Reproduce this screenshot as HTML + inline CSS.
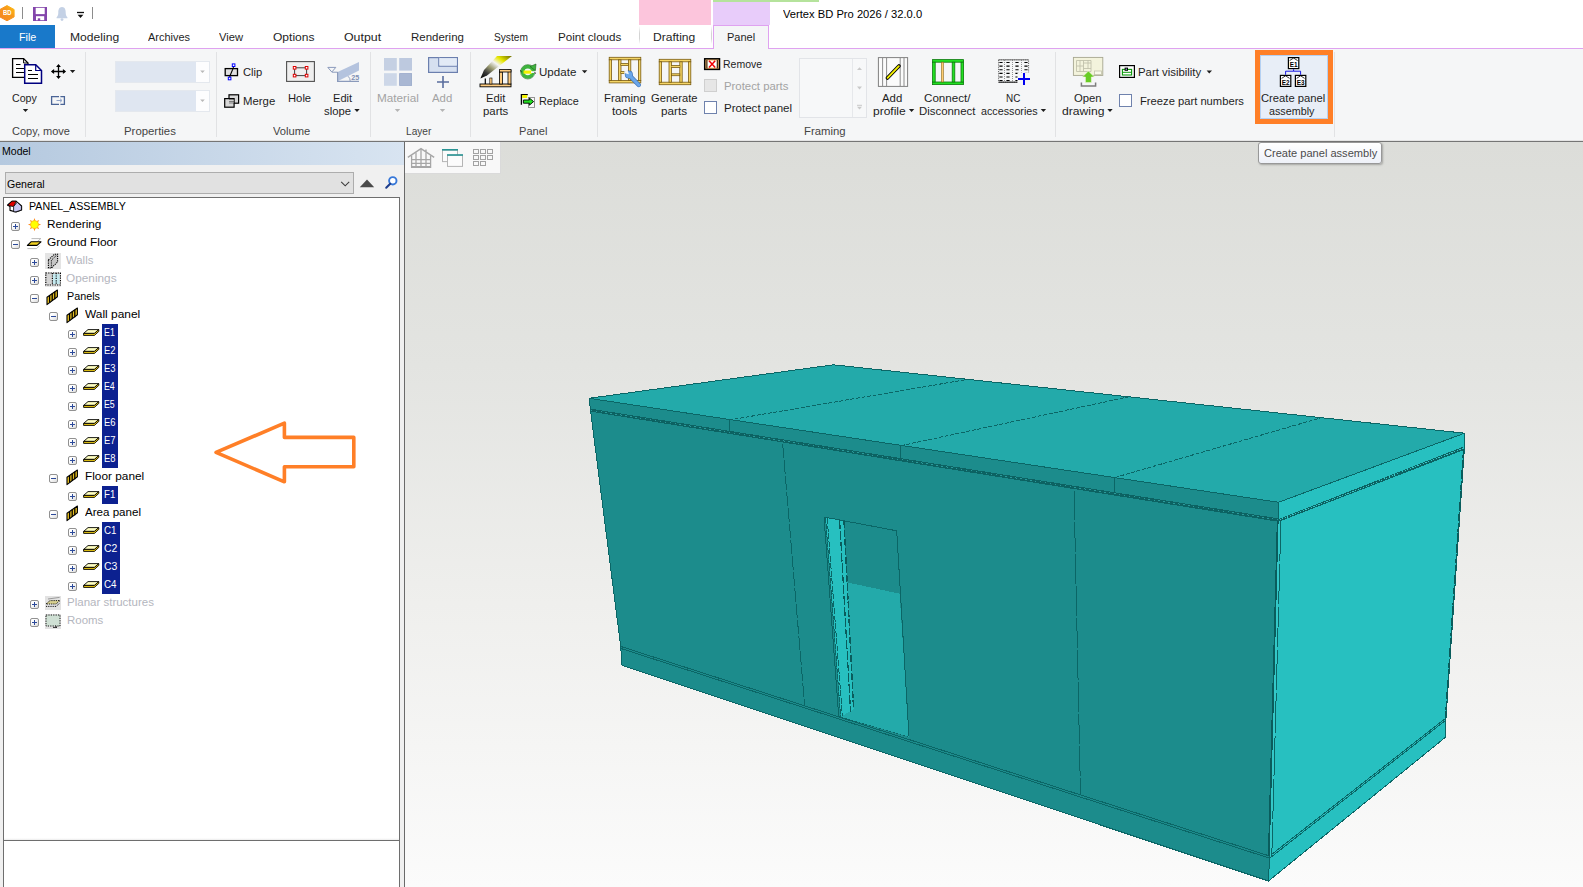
<!DOCTYPE html>
<html lang="en"><head><meta charset="utf-8"><title>Vertex BD Pro 2026 / 32.0.0</title>
<style>
html,body{margin:0;padding:0}
body{width:1583px;height:887px;overflow:hidden;position:relative;background:#fff;font:12px/14px "Liberation Sans",sans-serif}
.b{position:absolute}
.t{position:absolute;white-space:nowrap;transform-origin:0 50%;line-height:14px;height:14px;font-size:12px}
svg.ov{position:absolute;left:0;top:0;pointer-events:none}

</style></head><body>
<div class="b" style="left:405px;top:142px;width:1178px;height:745px;background:linear-gradient(#dcddd9,#e3e4e1 30%,#efefed 62%,#fbfbfb)"></div>
<div class="b" style="left:405px;top:142px;width:96px;height:32px;box-sizing:border-box;background:#f8f8f8;border-right:1px solid #dadada;border-bottom:1px solid #dadada"></div>
<div class="b" style="left:0px;top:142px;width:404px;height:745px;background:#f0f0f0"></div>
<div class="b" style="left:0px;top:142px;width:404px;height:23px;background:linear-gradient(90deg,#b5c9df,#d8e4f1)"></div>
<div class="b" style="left:404px;top:142px;width:1px;height:745px;background:#6a6a6a"></div>
<div class="b" style="left:5px;top:172px;width:349px;height:22px;box-sizing:border-box;border:1px solid #adadad;background:#e1e1e1"></div>
<div class="b" style="left:3px;top:197px;width:397px;height:690px;box-sizing:border-box;border:1px solid #6e6e6e;border-bottom:none;background:#fff"></div>
<div class="b" style="left:3px;top:840px;width:397px;height:1px;background:#6e6e6e"></div>
<div class="b" style="left:4px;top:838px;width:395px;height:2px;background:linear-gradient(#fff,#ececec)"></div>
<div class="b" style="left:102px;top:324px;width:16px;height:144px;background:#0c2190"></div>
<div class="b" style="left:102px;top:486px;width:16px;height:18px;background:#0c2190"></div>
<div class="b" style="left:102px;top:522px;width:18px;height:72px;background:#0c2190"></div>
<div class="b" style="left:11.0px;top:222px;width:9.0px;height:9px;box-sizing:border-box;border:1px solid #919191;border-radius:2px;background:linear-gradient(135deg,#fff 30%,#dcdcdc)"></div>
<div class="b" style="left:11.0px;top:240px;width:9.0px;height:9px;box-sizing:border-box;border:1px solid #919191;border-radius:2px;background:linear-gradient(135deg,#fff 30%,#dcdcdc)"></div>
<div class="b" style="left:30.0px;top:258px;width:9.0px;height:9px;box-sizing:border-box;border:1px solid #919191;border-radius:2px;background:linear-gradient(135deg,#fff 30%,#dcdcdc)"></div>
<div class="b" style="left:30.0px;top:276px;width:9.0px;height:9px;box-sizing:border-box;border:1px solid #919191;border-radius:2px;background:linear-gradient(135deg,#fff 30%,#dcdcdc)"></div>
<div class="b" style="left:30.0px;top:294px;width:9.0px;height:9px;box-sizing:border-box;border:1px solid #919191;border-radius:2px;background:linear-gradient(135deg,#fff 30%,#dcdcdc)"></div>
<div class="b" style="left:49.0px;top:312px;width:9.0px;height:9px;box-sizing:border-box;border:1px solid #919191;border-radius:2px;background:linear-gradient(135deg,#fff 30%,#dcdcdc)"></div>
<div class="b" style="left:68.0px;top:330px;width:9.0px;height:9px;box-sizing:border-box;border:1px solid #919191;border-radius:2px;background:linear-gradient(135deg,#fff 30%,#dcdcdc)"></div>
<div class="b" style="left:68.0px;top:348px;width:9.0px;height:9px;box-sizing:border-box;border:1px solid #919191;border-radius:2px;background:linear-gradient(135deg,#fff 30%,#dcdcdc)"></div>
<div class="b" style="left:68.0px;top:366px;width:9.0px;height:9px;box-sizing:border-box;border:1px solid #919191;border-radius:2px;background:linear-gradient(135deg,#fff 30%,#dcdcdc)"></div>
<div class="b" style="left:68.0px;top:384px;width:9.0px;height:9px;box-sizing:border-box;border:1px solid #919191;border-radius:2px;background:linear-gradient(135deg,#fff 30%,#dcdcdc)"></div>
<div class="b" style="left:68.0px;top:402px;width:9.0px;height:9px;box-sizing:border-box;border:1px solid #919191;border-radius:2px;background:linear-gradient(135deg,#fff 30%,#dcdcdc)"></div>
<div class="b" style="left:68.0px;top:420px;width:9.0px;height:9px;box-sizing:border-box;border:1px solid #919191;border-radius:2px;background:linear-gradient(135deg,#fff 30%,#dcdcdc)"></div>
<div class="b" style="left:68.0px;top:438px;width:9.0px;height:9px;box-sizing:border-box;border:1px solid #919191;border-radius:2px;background:linear-gradient(135deg,#fff 30%,#dcdcdc)"></div>
<div class="b" style="left:68.0px;top:456px;width:9.0px;height:9px;box-sizing:border-box;border:1px solid #919191;border-radius:2px;background:linear-gradient(135deg,#fff 30%,#dcdcdc)"></div>
<div class="b" style="left:49.0px;top:474px;width:9.0px;height:9px;box-sizing:border-box;border:1px solid #919191;border-radius:2px;background:linear-gradient(135deg,#fff 30%,#dcdcdc)"></div>
<div class="b" style="left:68.0px;top:492px;width:9.0px;height:9px;box-sizing:border-box;border:1px solid #919191;border-radius:2px;background:linear-gradient(135deg,#fff 30%,#dcdcdc)"></div>
<div class="b" style="left:49.0px;top:510px;width:9.0px;height:9px;box-sizing:border-box;border:1px solid #919191;border-radius:2px;background:linear-gradient(135deg,#fff 30%,#dcdcdc)"></div>
<div class="b" style="left:68.0px;top:528px;width:9.0px;height:9px;box-sizing:border-box;border:1px solid #919191;border-radius:2px;background:linear-gradient(135deg,#fff 30%,#dcdcdc)"></div>
<div class="b" style="left:68.0px;top:546px;width:9.0px;height:9px;box-sizing:border-box;border:1px solid #919191;border-radius:2px;background:linear-gradient(135deg,#fff 30%,#dcdcdc)"></div>
<div class="b" style="left:68.0px;top:564px;width:9.0px;height:9px;box-sizing:border-box;border:1px solid #919191;border-radius:2px;background:linear-gradient(135deg,#fff 30%,#dcdcdc)"></div>
<div class="b" style="left:68.0px;top:582px;width:9.0px;height:9px;box-sizing:border-box;border:1px solid #919191;border-radius:2px;background:linear-gradient(135deg,#fff 30%,#dcdcdc)"></div>
<div class="b" style="left:30.0px;top:600px;width:9.0px;height:9px;box-sizing:border-box;border:1px solid #919191;border-radius:2px;background:linear-gradient(135deg,#fff 30%,#dcdcdc)"></div>
<div class="b" style="left:30.0px;top:618px;width:9.0px;height:9px;box-sizing:border-box;border:1px solid #919191;border-radius:2px;background:linear-gradient(135deg,#fff 30%,#dcdcdc)"></div>
<div class="b" style="left:0px;top:0px;width:1583px;height:49px;background:#fff"></div>
<div class="b" style="left:639px;top:0px;width:72px;height:25px;background:#fcc5dc"></div>
<div class="b" style="left:713px;top:0px;width:57px;height:25px;background:#e8ccfa"></div>
<div class="b" style="left:713px;top:0px;width:106px;height:2px;background:#b5e39c"></div>
<div class="b" style="left:0px;top:25px;width:55px;height:23px;background:#1979ca"></div>
<div class="b" style="left:0px;top:49px;width:1583px;height:92px;background:#f5f6f7"></div>
<div class="b" style="left:0px;top:48px;width:1583px;height:1px;background:#dfa2f0"></div>
<div class="b" style="left:713px;top:25px;width:56px;height:24px;background:#f5f6f7;border:1px solid #dfa2f0;border-bottom:none;box-sizing:border-box"></div>
<div class="b" style="left:639px;top:26px;width:1px;height:18px;background:linear-gradient(#fff,#d4d4d4 40%,#d4d4d4 70%,#fff)"></div>
<div class="b" style="left:711px;top:26px;width:1px;height:18px;background:linear-gradient(#fff,#d4d4d4 40%,#d4d4d4 70%,#fff)"></div>
<div class="b" style="left:0px;top:140px;width:1583px;height:1px;background:#e4e4e4"></div>
<div class="b" style="left:0px;top:141px;width:1583px;height:1px;background:#757575"></div>
<div class="b" style="left:85px;top:52px;width:1px;height:85px;background:#e1e2e4"></div>
<div class="b" style="left:216px;top:52px;width:1px;height:85px;background:#e1e2e4"></div>
<div class="b" style="left:370px;top:52px;width:1px;height:85px;background:#e1e2e4"></div>
<div class="b" style="left:470px;top:52px;width:1px;height:85px;background:#e1e2e4"></div>
<div class="b" style="left:597px;top:52px;width:1px;height:85px;background:#e1e2e4"></div>
<div class="b" style="left:1055px;top:52px;width:1px;height:85px;background:#e1e2e4"></div>
<div class="b" style="left:1334px;top:52px;width:1px;height:85px;background:#e1e2e4"></div>
<div class="b" style="left:115px;top:61px;width:95px;height:22px;box-sizing:border-box;border:1px solid #e4e8ee;background:linear-gradient(90deg,#dfe6f1 0,#dfe6f1 80px,#fdfdfe 80px)"></div>
<div class="b" style="left:115px;top:90px;width:95px;height:22px;box-sizing:border-box;border:1px solid #e4e8ee;background:linear-gradient(90deg,#dfe6f1 0,#dfe6f1 80px,#fdfdfe 80px)"></div>
<div class="b" style="left:704px;top:79px;width:13px;height:13px;box-sizing:border-box;border:1px solid #cfcfcf;background:#e6e6e6"></div>
<div class="b" style="left:704px;top:101px;width:13px;height:13px;box-sizing:border-box;border:1px solid #6f82ad;background:#fff"></div>
<div class="b" style="left:1119px;top:94px;width:13px;height:13px;box-sizing:border-box;border:1px solid #6f82ad;background:#fff"></div>
<div class="b" style="left:799px;top:58px;width:68px;height:60px;box-sizing:border-box;border:1px solid #e2e4e8;background:#f7f8f9"></div>
<div class="b" style="left:852px;top:59px;width:1px;height:58px;background:#e6e8eb"></div>
<div class="b" style="left:1255px;top:50px;width:78px;height:74px;box-sizing:border-box;border:5px solid #ff7f27;background:#e8eef7"></div>
<div class="b" style="left:1260px;top:55px;width:68px;height:64px;box-sizing:border-box;border:1px solid #b4d0f2"></div>
<svg class="ov" width="1583" height="887" viewBox="0 0 1583 887">
<path d="M407.8,157.4L421,148.6L434.2,157.4M426,149.4v2.6" fill="none" stroke="#a6a6a6" stroke-width="1.4"/>
<path d="M411.6,155.4V167.4H430.6V155.4M411.6,159.6H430.6M411.6,163.4H430.6M416,152.6V167.4M421,149V167.4M426,152.6V167.4M411.6,166.6H430.6" fill="none" stroke="#a6a6a6" stroke-width="1.3"/>
<rect x="442.5" y="150" width="15" height="11.6" fill="#fbfbfb" stroke="#b4b4b4" stroke-width="1"/><rect x="442" y="149" width="16" height="1.6" fill="#2a9494"/>
<rect x="447.5" y="155.2" width="15" height="11.2" fill="#fbfbfb" stroke="#b4b4b4" stroke-width="1"/><rect x="447" y="154.2" width="16" height="1.6" fill="#2a9494"/>
<rect x="473.5" y="149.5" width="5" height="4" fill="none" stroke="#a2a2a2" stroke-width="1"/>
<rect x="480.5" y="149.5" width="5" height="4" fill="none" stroke="#a2a2a2" stroke-width="1"/>
<rect x="487.5" y="149.5" width="5" height="4" fill="none" stroke="#a2a2a2" stroke-width="1"/>
<rect x="473.5" y="155.5" width="5" height="4" fill="none" stroke="#a2a2a2" stroke-width="1"/>
<rect x="480.5" y="155.5" width="5" height="4" fill="none" stroke="#a2a2a2" stroke-width="1"/>
<rect x="487.5" y="155.5" width="5" height="4" fill="none" stroke="#a2a2a2" stroke-width="1"/>
<rect x="473.5" y="161.5" width="5" height="4" fill="none" stroke="#a2a2a2" stroke-width="1"/>
<rect x="480.5" y="161.5" width="5" height="4" fill="none" stroke="#a2a2a2" stroke-width="1"/>
<g shape-rendering="crispEdges">
<polygon points="590.6,411.2 1278.5,521.3 1269.6,856.0 620.7,646.4" fill="#1c8c8c" stroke="#0b6666" stroke-width="1" stroke-linejoin="round"/>
<polygon points="1278.5,521.3 1464.3,449.3 1446.0,718.0 1269.6,856.0" fill="#27c0c0" stroke="#0b6666" stroke-width="1" stroke-linejoin="round"/>
<polygon points="620.7,646.4 1269.6,856.0 1268.5,881.0 622.0,665.4" fill="#1c8c8c" stroke="#0b6666" stroke-width="1" stroke-linejoin="round"/>
<polygon points="1269.6,856.0 1446.0,718.0 1445.2,737.5 1268.5,881.0" fill="#27c0c0" stroke="#0b6666" stroke-width="1" stroke-linejoin="round"/>
<polygon points="589.0,398.3 1278.5,502.3 1278.5,521.3 590.6,411.2" fill="#1c8c8c" stroke="#0b6666" stroke-width="1" stroke-linejoin="round"/>
<polygon points="1278.5,502.3 1464.5,433.2 1464.3,449.3 1278.5,521.3" fill="#27c0c0" stroke="#0b6666" stroke-width="1" stroke-linejoin="round"/>
<polygon points="589.0,398.3 833.5,364.8 1464.5,433.2 1278.5,502.3" fill="#23aaaa" stroke="#0b6666" stroke-width="1" stroke-linejoin="round"/>
<line x1="729.0" y1="420.0" x2="969.9" y2="379.0" stroke="#0b6666" stroke-width="1" stroke-dasharray="4 1.6"/>
<line x1="729.0" y1="420.0" x2="729.0" y2="431.6" stroke="#0b6666" stroke-width="1"/>
<line x1="900.7" y1="445.7" x2="1128.0" y2="397.0" stroke="#0b6666" stroke-width="1" stroke-dasharray="4 1.6"/>
<line x1="900.7" y1="445.7" x2="900.7" y2="459.0" stroke="#0b6666" stroke-width="1"/>
<line x1="1114.9" y1="477.5" x2="1320.2" y2="418.0" stroke="#0b6666" stroke-width="1" stroke-dasharray="4 1.6"/>
<line x1="1114.9" y1="477.5" x2="1114.9" y2="493.2" stroke="#0b6666" stroke-width="1"/>
<line x1="590.6" y1="410.2" x2="1278.5" y2="519.9" stroke="#0c6262" stroke-width="3"/>
<line x1="590.6" y1="410.2" x2="1278.5" y2="519.9" stroke="#2a9a9a" stroke-width="1" stroke-dasharray="1.5 3.5"/>
<line x1="1279.5" y1="520.1" x2="1463.3" y2="448.1" stroke="#0c6262" stroke-width="2.6"/>
<line x1="1279.5" y1="520.1" x2="1463.3" y2="448.1" stroke="#39c8c8" stroke-width="1" stroke-dasharray="1.2 1.6"/>
<line x1="620.7" y1="648.4" x2="1269.6" y2="858.2" stroke="#0b6666" stroke-width="1"/>
<line x1="1269.6" y1="858.2" x2="1446.0" y2="720.0" stroke="#0b6666" stroke-width="1"/>
<line x1="1279.5" y1="521.3" x2="1270.6" y2="856.0" stroke="#34c8c8" stroke-width="2"/>
<line x1="1277.7" y1="521.3" x2="1268.8" y2="856.0" stroke="#0a5c5c" stroke-width="1.8"/>
<line x1="1280.9" y1="521.3" x2="1271.8" y2="856.0" stroke="#0b6666" stroke-width="1" stroke-dasharray="40 3"/>
<line x1="1463.7" y1="449.3" x2="1445.6" y2="718.0" stroke="#0a5c5c" stroke-width="1.6" stroke-dasharray="9 1.5"/>
<line x1="782.7" y1="444.2" x2="804.6" y2="705.0" stroke="#0b6666" stroke-width="1" stroke-dasharray="14 2"/>
<line x1="1074.0" y1="490.0" x2="1080.5" y2="794.0" stroke="#0b6666" stroke-width="1" stroke-dasharray="30 2"/>
<polygon points="824.0,517.0 896.7,530.8 909.0,736.7 838.7,716.2" fill="#1c8c8c" stroke="#0b6666" stroke-width="1" stroke-linejoin="round"/>
<polygon points="845.4,582.0 899.6,593.7 909.0,736.7 838.7,716.2 853.6,709.4" fill="#23aaaa" stroke="none" stroke-width="0" stroke-linejoin="round"/>
<polygon points="826.0,518.0 844.0,520.6 853.6,709.4 841.0,716.6" fill="#27c0c0" stroke="none" stroke-width="0" stroke-linejoin="round"/>
<line x1="896.7" y1="530.8" x2="909.0" y2="736.7" stroke="#0b6666" stroke-width="1" stroke-dasharray="14 2"/>
<line x1="824.0" y1="517.0" x2="896.7" y2="530.8" stroke="#0b6666" stroke-width="1"/>
<line x1="844.0" y1="520.6" x2="853.6" y2="709.4" stroke="#0a5c5c" stroke-width="1.4" stroke-dasharray="7 2"/>
<line x1="839.6" y1="519.6" x2="850.6" y2="712.0" stroke="#0a5c5c" stroke-width="1.2" stroke-dasharray="9 2"/>
<line x1="824.0" y1="517.0" x2="838.7" y2="716.2" stroke="#0b6666" stroke-width="1"/>
<line x1="825.6" y1="518.0" x2="840.6" y2="716.6" stroke="#0b6666" stroke-width="1" stroke-dasharray="5 1"/>
<line x1="827.2" y1="518.4" x2="842.4" y2="716.0" stroke="#0b6666" stroke-width="1" stroke-dasharray="6 1.5"/>
</g>
<path d="M341.2,181.8l4,4l4,-4" fill="none" stroke="#3c3c3c" stroke-width="1.1"/>
<path d="M359.8,187.2h14.4l-7.2,-7.6z" fill="#4a4a4a"/>
<circle cx="392.8" cy="180.8" r="3.7" fill="#fff" stroke="#3878d8" stroke-width="1.9"/><path d="M390.2,183.8l-4,4" stroke="#1c3c8c" stroke-width="2" stroke-linecap="round"/>
<path d="M7.6,205L12,201.2L16,201.2L21.6,206V210L16,212L10,210.4V206.4Z" fill="#fff" stroke="#000" stroke-width="1.1" stroke-linejoin="round"/>
<path d="M7.6,205.4L12,201.2H16.4L13.6,206.6Z" fill="#e00000" stroke="#000" stroke-width="0.8"/>
<path d="M13.6,206.6L17.2,202.2L21.4,206.2V210L16,211.8H13.6Z" fill="#c8c8f4" stroke="#000" stroke-width="0.8"/>
<path d="M13.0,226.5h5" stroke="#2c4a9a" stroke-width="1"/>
<path d="M15.5,224.0v5" stroke="#2c4a9a" stroke-width="1"/>
<path d="M37.91,223.43L41.10,224.60L37.91,225.77ZM37.73,226.18L39.17,229.27L36.08,227.83ZM35.67,228.01L34.50,231.20L33.33,228.01ZM32.92,227.83L29.83,229.27L31.27,226.18ZM31.09,225.77L27.90,224.60L31.09,223.43ZM31.27,223.02L29.83,219.93L32.92,221.37ZM33.33,221.19L34.50,218.00L35.67,221.19ZM36.08,221.37L39.17,219.93L37.73,223.02Z" fill="#ff8a1e"/><circle cx="34.5" cy="224.6" r="4" fill="#ffff00" stroke="#ffb020" stroke-width="0.7"/>
<path d="M13.0,244.5h5" stroke="#2c4a9a" stroke-width="1"/>
<path d="M31.5,238.6H40.8L36.6,242.2" fill="none" stroke="#a8a8a8" stroke-width="0.8"/>
<path d="M27.4,245.4L31,241.8H41L37,245.4Z" fill="#f0d020" stroke="#000" stroke-width="1.1" stroke-linejoin="round"/>
<path d="M27.4,248.6H36.6L39.6,245.6" fill="none" stroke="#a8a8a8" stroke-width="0.8"/>
<path d="M32.0,262.5h5" stroke="#2c4a9a" stroke-width="1"/>
<path d="M34.5,260.0v5" stroke="#2c4a9a" stroke-width="1"/>
<rect x="45" y="253" width="16" height="16" fill="#e4e4e4"/>
<path d="M48.4,260L54.4,254.2H57.6V262L51.4,268H48.4Z" fill="#c6c6c6" stroke="#000" stroke-width="1.1" stroke-dasharray="1.2 1"/>
<path d="M51.4,268V260.2L57.4,254.4" fill="none" stroke="#000" stroke-width="0.9" stroke-dasharray="1.2 1"/>
<path d="M32.0,280.5h5" stroke="#2c4a9a" stroke-width="1"/>
<path d="M34.5,278.0v5" stroke="#2c4a9a" stroke-width="1"/>
<rect x="45" y="272" width="16" height="15" fill="#e6e6e6"/>
<rect x="45.8" y="273" width="14.6" height="12" fill="#d4d4d4" stroke="#000" stroke-width="1.2" stroke-dasharray="1.2 1.2"/>
<rect x="53" y="274" width="6.6" height="10" fill="#c4eaf0"/><path d="M52.4,273v12M56.2,273v12" stroke="#000" stroke-width="1.1" stroke-dasharray="1.2 1.2"/>
<path d="M32.0,298.5h5" stroke="#2c4a9a" stroke-width="1"/>
<path d="M47.0,297.2L57.4,290.0V296.8L47.0,304.59999999999997Z" fill="#e8c020" stroke="#000" stroke-width="1.1" stroke-linejoin="round"/><path d="M49.60,295.40v7.4" stroke="#000" stroke-width="1.3"/><path d="M52.20,293.60v7.4" stroke="#000" stroke-width="1.3"/><path d="M54.80,291.80v7.4" stroke="#000" stroke-width="1.3"/>
<path d="M51.0,316.5h5" stroke="#2c4a9a" stroke-width="1"/>
<path d="M67.0,315.2L77.4,308.0V314.8L67.0,322.59999999999997Z" fill="#e8c020" stroke="#000" stroke-width="1.1" stroke-linejoin="round"/><path d="M69.60,313.40v7.4" stroke="#000" stroke-width="1.3"/><path d="M72.20,311.60v7.4" stroke="#000" stroke-width="1.3"/><path d="M74.80,309.80v7.4" stroke="#000" stroke-width="1.3"/>
<path d="M70.0,334.5h5" stroke="#2c4a9a" stroke-width="1"/>
<path d="M72.5,332.0v5" stroke="#2c4a9a" stroke-width="1"/>
<path d="M88,329.6H98.8L94.4,333.4H83.6Z" fill="#ffffc0" stroke="#000" stroke-width="0.9" stroke-linejoin="round"/><path d="M83.6,333.4H94.4L98.8,329.6V331.4L94.4,335.4H83.6Z" fill="#f0cc10" stroke="#000" stroke-width="0.9" stroke-linejoin="round"/>
<path d="M70.0,352.5h5" stroke="#2c4a9a" stroke-width="1"/>
<path d="M72.5,350.0v5" stroke="#2c4a9a" stroke-width="1"/>
<path d="M88,347.6H98.8L94.4,351.4H83.6Z" fill="#ffffc0" stroke="#000" stroke-width="0.9" stroke-linejoin="round"/><path d="M83.6,351.4H94.4L98.8,347.6V349.4L94.4,353.4H83.6Z" fill="#f0cc10" stroke="#000" stroke-width="0.9" stroke-linejoin="round"/>
<path d="M70.0,370.5h5" stroke="#2c4a9a" stroke-width="1"/>
<path d="M72.5,368.0v5" stroke="#2c4a9a" stroke-width="1"/>
<path d="M88,365.6H98.8L94.4,369.4H83.6Z" fill="#ffffc0" stroke="#000" stroke-width="0.9" stroke-linejoin="round"/><path d="M83.6,369.4H94.4L98.8,365.6V367.4L94.4,371.4H83.6Z" fill="#f0cc10" stroke="#000" stroke-width="0.9" stroke-linejoin="round"/>
<path d="M70.0,388.5h5" stroke="#2c4a9a" stroke-width="1"/>
<path d="M72.5,386.0v5" stroke="#2c4a9a" stroke-width="1"/>
<path d="M88,383.6H98.8L94.4,387.4H83.6Z" fill="#ffffc0" stroke="#000" stroke-width="0.9" stroke-linejoin="round"/><path d="M83.6,387.4H94.4L98.8,383.6V385.4L94.4,389.4H83.6Z" fill="#f0cc10" stroke="#000" stroke-width="0.9" stroke-linejoin="round"/>
<path d="M70.0,406.5h5" stroke="#2c4a9a" stroke-width="1"/>
<path d="M72.5,404.0v5" stroke="#2c4a9a" stroke-width="1"/>
<path d="M88,401.6H98.8L94.4,405.4H83.6Z" fill="#ffffc0" stroke="#000" stroke-width="0.9" stroke-linejoin="round"/><path d="M83.6,405.4H94.4L98.8,401.6V403.4L94.4,407.4H83.6Z" fill="#f0cc10" stroke="#000" stroke-width="0.9" stroke-linejoin="round"/>
<path d="M70.0,424.5h5" stroke="#2c4a9a" stroke-width="1"/>
<path d="M72.5,422.0v5" stroke="#2c4a9a" stroke-width="1"/>
<path d="M88,419.6H98.8L94.4,423.4H83.6Z" fill="#ffffc0" stroke="#000" stroke-width="0.9" stroke-linejoin="round"/><path d="M83.6,423.4H94.4L98.8,419.6V421.4L94.4,425.4H83.6Z" fill="#f0cc10" stroke="#000" stroke-width="0.9" stroke-linejoin="round"/>
<path d="M70.0,442.5h5" stroke="#2c4a9a" stroke-width="1"/>
<path d="M72.5,440.0v5" stroke="#2c4a9a" stroke-width="1"/>
<path d="M88,437.6H98.8L94.4,441.4H83.6Z" fill="#ffffc0" stroke="#000" stroke-width="0.9" stroke-linejoin="round"/><path d="M83.6,441.4H94.4L98.8,437.6V439.4L94.4,443.4H83.6Z" fill="#f0cc10" stroke="#000" stroke-width="0.9" stroke-linejoin="round"/>
<path d="M70.0,460.5h5" stroke="#2c4a9a" stroke-width="1"/>
<path d="M72.5,458.0v5" stroke="#2c4a9a" stroke-width="1"/>
<path d="M88,455.6H98.8L94.4,459.4H83.6Z" fill="#ffffc0" stroke="#000" stroke-width="0.9" stroke-linejoin="round"/><path d="M83.6,459.4H94.4L98.8,455.6V457.4L94.4,461.4H83.6Z" fill="#f0cc10" stroke="#000" stroke-width="0.9" stroke-linejoin="round"/>
<path d="M51.0,478.5h5" stroke="#2c4a9a" stroke-width="1"/>
<path d="M67.0,477.2L77.4,470.0V476.8L67.0,484.59999999999997Z" fill="#e8c020" stroke="#000" stroke-width="1.1" stroke-linejoin="round"/><path d="M69.60,475.40v7.4" stroke="#000" stroke-width="1.3"/><path d="M72.20,473.60v7.4" stroke="#000" stroke-width="1.3"/><path d="M74.80,471.80v7.4" stroke="#000" stroke-width="1.3"/>
<path d="M70.0,496.5h5" stroke="#2c4a9a" stroke-width="1"/>
<path d="M72.5,494.0v5" stroke="#2c4a9a" stroke-width="1"/>
<path d="M88,491.6H98.8L94.4,495.4H83.6Z" fill="#ffffc0" stroke="#000" stroke-width="0.9" stroke-linejoin="round"/><path d="M83.6,495.4H94.4L98.8,491.6V493.4L94.4,497.4H83.6Z" fill="#f0cc10" stroke="#000" stroke-width="0.9" stroke-linejoin="round"/>
<path d="M51.0,514.5h5" stroke="#2c4a9a" stroke-width="1"/>
<path d="M67.0,513.2L77.4,506.0V512.8L67.0,520.6Z" fill="#e8c020" stroke="#000" stroke-width="1.1" stroke-linejoin="round"/><path d="M69.60,511.40v7.4" stroke="#000" stroke-width="1.3"/><path d="M72.20,509.60v7.4" stroke="#000" stroke-width="1.3"/><path d="M74.80,507.80v7.4" stroke="#000" stroke-width="1.3"/>
<path d="M70.0,532.5h5" stroke="#2c4a9a" stroke-width="1"/>
<path d="M72.5,530.0v5" stroke="#2c4a9a" stroke-width="1"/>
<path d="M88,527.6H98.8L94.4,531.4H83.6Z" fill="#ffffc0" stroke="#000" stroke-width="0.9" stroke-linejoin="round"/><path d="M83.6,531.4H94.4L98.8,527.6V529.4L94.4,533.4H83.6Z" fill="#f0cc10" stroke="#000" stroke-width="0.9" stroke-linejoin="round"/>
<path d="M70.0,550.5h5" stroke="#2c4a9a" stroke-width="1"/>
<path d="M72.5,548.0v5" stroke="#2c4a9a" stroke-width="1"/>
<path d="M88,545.6H98.8L94.4,549.4H83.6Z" fill="#ffffc0" stroke="#000" stroke-width="0.9" stroke-linejoin="round"/><path d="M83.6,549.4H94.4L98.8,545.6V547.4L94.4,551.4H83.6Z" fill="#f0cc10" stroke="#000" stroke-width="0.9" stroke-linejoin="round"/>
<path d="M70.0,568.5h5" stroke="#2c4a9a" stroke-width="1"/>
<path d="M72.5,566.0v5" stroke="#2c4a9a" stroke-width="1"/>
<path d="M88,563.6H98.8L94.4,567.4H83.6Z" fill="#ffffc0" stroke="#000" stroke-width="0.9" stroke-linejoin="round"/><path d="M83.6,567.4H94.4L98.8,563.6V565.4L94.4,569.4H83.6Z" fill="#f0cc10" stroke="#000" stroke-width="0.9" stroke-linejoin="round"/>
<path d="M70.0,586.5h5" stroke="#2c4a9a" stroke-width="1"/>
<path d="M72.5,584.0v5" stroke="#2c4a9a" stroke-width="1"/>
<path d="M88,581.6H98.8L94.4,585.4H83.6Z" fill="#ffffc0" stroke="#000" stroke-width="0.9" stroke-linejoin="round"/><path d="M83.6,585.4H94.4L98.8,581.6V583.4L94.4,587.4H83.6Z" fill="#f0cc10" stroke="#000" stroke-width="0.9" stroke-linejoin="round"/>
<path d="M32.0,604.5h5" stroke="#2c4a9a" stroke-width="1"/>
<path d="M34.5,602.0v5" stroke="#2c4a9a" stroke-width="1"/>
<rect x="45" y="596" width="16" height="14" fill="#e2e2e2"/>
<path d="M46,604L50,600.6H60L56,604Z" fill="#d8d090" stroke="#000" stroke-width="0.9" stroke-dasharray="1.2 1"/><path d="M46,606.4H56L60,603" fill="none" stroke="#000" stroke-width="0.9" stroke-dasharray="1.2 1"/><path d="M48,599L59.6,597.4" stroke="#888" stroke-width="0.8"/>
<path d="M32.0,622.5h5" stroke="#2c4a9a" stroke-width="1"/>
<path d="M34.5,620.0v5" stroke="#2c4a9a" stroke-width="1"/>
<rect x="45" y="614" width="16" height="15" fill="#e2e2e2"/>
<rect x="46" y="615" width="14" height="11" fill="#cfe0d4" stroke="#000" stroke-width="0.9" stroke-dasharray="1.2 1.2"/><path d="M53,627.4h4l-1.6,-1.4" fill="none" stroke="#000" stroke-width="0.8"/>
<path d="M216,452.4 L284.4,423.2 V437.4 H353.8 V466.8 H284.4 V481.8 Z" fill="none" stroke="#ff7f27" stroke-width="3.6" stroke-linejoin="round"/>
<defs><linearGradient id="gbd" x1="0" y1="1" x2="1" y2="0"><stop offset="0" stop-color="#f58220"/><stop offset=".6" stop-color="#f7981d"/><stop offset="1" stop-color="#ffc20e"/></linearGradient></defs>
<path d="M7,5.6 L14.1,9.5 V16.9 L7,20.8 L-0.1,16.9 V9.5 Z" fill="url(#gbd)" stroke="url(#gbd)" stroke-width="1" stroke-linejoin="round"/>
<path d="M22.5,7v12M92.5,7v12" stroke="#8c8c8c" stroke-width="1"/>
<rect x="33" y="7" width="14" height="14" fill="#8345ab"/>
<rect x="35.7" y="7.8" width="9" height="6.3" fill="#fff"/>
<rect x="36" y="16.2" width="8.2" height="4" fill="#fff"/><rect x="37.8" y="18.3" width="2.4" height="2.7" fill="#8345ab"/>
<path d="M62,7 C59,7 58.3,10 58.3,12.5 C58.3,15 57.6,16.3 56.6,17.2 V18.3 H67.4 V17.2 C66.4,16.3 65.7,15 65.7,12.5 C65.7,10 65,7 62,7Z" fill="#c4d1e5"/><circle cx="62" cy="19.6" r="1.4" fill="#c4d1e5"/>
<path d="M77,12.5h7" stroke="#111" stroke-width="1.3"/><path d="M77.6,14.8h5.8l-2.9,3.2z" fill="#111"/>
<path d="M12.6,58.6h11l4.4,4.4v14.4h-15.4z" fill="#fff" stroke="#000" stroke-width="1.3"/><path d="M23.6,58.6v4.4h4.4" fill="none" stroke="#000" stroke-width="1"/>
<path d="M16,64.5h4.5M16,68.5h8M16,72.5h8" stroke="#000" stroke-width="1.2"/>
<path d="M24.7,64.7h11l5.8,5.8v12.8h-16.8z" fill="#fff" stroke="#000080" stroke-width="1.5"/><path d="M35.7,64.7v5.8h5.8" fill="none" stroke="#000080" stroke-width="1.2"/>
<path d="M28,70.5h4M28,74.5h10M28,78.5h10" stroke="#000" stroke-width="1.2"/>
<path d="M22.80,109.00h5.4l-2.70,3z" fill="#1e1e1e"/>
<path d="M52,71.5h13M58.5,65v13" stroke="#000" stroke-width="1.3"/>
<path d="M50.9,71.5l3.2,-2.4v4.8zM66.1,71.5l-3.2,-2.4v4.8zM58.5,63.9l-2.4,3.2h4.8zM58.5,79.1l-2.4,-3.2h4.8z" fill="#000"/>
<path d="M69.90,70.10h5.4l-2.70,3z" fill="#1e1e1e"/>
<path d="M59,96.6H51.6V104.4H59M60.4,96.6H64.4V104.4H60.4" fill="none" stroke="#4a6496" stroke-width="1.3"/><path d="M56.5,100.5h5M60,98.7l2,1.8l-2,1.8" fill="none" stroke="#8ea2c8" stroke-width="1"/>
<path d="M200.20,70.50h4.6l-2.30,2.6z" fill="#b9b9b9"/>
<path d="M200.20,99.50h4.6l-2.30,2.6z" fill="#b9b9b9"/>
<rect x="225.2" y="68.6" width="12.3" height="7" fill="#e0e0e0" stroke="#000" stroke-width="1.3"/>
<path d="M233.6,66.5 C233,70 230.5,73 229.6,77.5" fill="none" stroke="#000" stroke-width="1.1"/>
<rect x="232.3" y="63.9" width="2.6" height="2.6" fill="#fff" stroke="#0000ff" stroke-width="1"/><rect x="228.3" y="77.2" width="2.6" height="2.6" fill="#fff" stroke="#0000ff" stroke-width="1"/>
<rect x="229" y="94.8" width="9.6" height="8.4" fill="#d8d8d8" stroke="#000" stroke-width="1.2"/>
<rect x="224.7" y="98.6" width="9.4" height="8.6" fill="#d8d8d8" stroke="#000" stroke-width="1.2"/>
<rect x="229.6" y="99.2" width="4" height="3.6" fill="#d0d0d0"/><path d="M229.5,99.5h4.5M229.5,101.5h4.5M229.5,103h4.5" stroke="#000" stroke-width="0.8" stroke-dasharray="1 1"/>
<rect x="286.6" y="61.6" width="27.8" height="19.8" fill="#efefef" stroke="#505050" stroke-width="1.1"/>
<rect x="294.6" y="67.8" width="12" height="7.8" fill="none" stroke="#404040" stroke-width="1"/>
<rect x="293.3" y="66.5" width="2.6" height="2.6" fill="#fff" stroke="#e00000" stroke-width="1"/>
<rect x="305.3" y="66.5" width="2.6" height="2.6" fill="#fff" stroke="#e00000" stroke-width="1"/>
<rect x="293.3" y="74.3" width="2.6" height="2.6" fill="#fff" stroke="#e00000" stroke-width="1"/>
<rect x="305.3" y="74.3" width="2.6" height="2.6" fill="#fff" stroke="#e00000" stroke-width="1"/>
<path d="M337.6,72 L359,62 V70.6 L337.6,81.2Z" fill="#b4c3de"/>
<path d="M327.8,67.4h8l-4,4.6zM331.8,72.2h5.8" fill="none" stroke="#8a9abb" stroke-width="1"/>
<path d="M337.6,72V81.4H359" fill="none" stroke="#8a9abb" stroke-width="1.2"/><path d="M348,76.2 a6,6 0 0 1 2.2,5" fill="none" stroke="#8a9abb" stroke-width="0.9"/>
<text x="351.2" y="80.2" font-family="Liberation Sans, sans-serif" font-size="7" fill="#7f90b4" font-weight="bold" textLength="8" lengthAdjust="spacingAndGlyphs">25</text>
<path d="M354.30,109.00h5.4l-2.70,3z" fill="#1e1e1e"/>
<rect x="384" y="58" width="12.8" height="12.6" fill="#c5d0e3"/><rect x="399.2" y="58" width="12.8" height="12.6" fill="#bdc9df"/>
<rect x="384" y="73.2" width="12.8" height="12.6" fill="#cdd7e8"/><rect x="399.6" y="73.6" width="12" height="11.8" fill="#a9b7d3" stroke="#98a9ca" stroke-width="0.8"/>
<path d="M394.80,109.00h5.4l-2.70,3z" fill="#b5b5b5"/>
<path d="M439.80,109.00h5.4l-2.70,3z" fill="#b5b5b5"/>
<rect x="428.6" y="57.6" width="28.8" height="14.8" fill="#d6e0f0" stroke="#6b7fae" stroke-width="1.2"/>
<path d="M438.8,57.6v8.6h18.6" fill="#e4ecf8" stroke="#6b7fae" stroke-width="1.2"/><rect x="439.4" y="58.2" width="17.4" height="7.4" fill="#e2eaf6"/>
<path d="M437,82h12M443,76v12" stroke="#5a6e9e" stroke-width="1.6"/>
<defs><linearGradient id="gpen" x1="1" y1="0" x2="0" y2="1"><stop offset="0" stop-color="#6b6b00"/><stop offset=".25" stop-color="#e6e600"/><stop offset=".42" stop-color="#f4f4f4"/><stop offset=".6" stop-color="#9a9a70"/><stop offset=".78" stop-color="#3a3a3a"/><stop offset="1" stop-color="#000"/></linearGradient></defs>
<path d="M497,56 H512 L487,75.5 L480.4,78.4 L484,70 Z" fill="url(#gpen)"/>
<rect x="480" y="84" width="31" height="2.8" fill="#ffcc80" stroke="#000" stroke-width="0.9"/>
<path d="M485.3,84v-5.5" stroke="#000" stroke-width="1.2"/><rect x="489.8" y="78" width="2.2" height="6" fill="#ffcc80" stroke="#000" stroke-width="0.6"/>
<rect x="499.4" y="72" width="3" height="12" fill="#ffcc80" stroke="#000" stroke-width="0.8"/><rect x="508" y="70" width="3" height="14" fill="#ffcc80" stroke="#000" stroke-width="0.8"/>
<rect x="499.4" y="69.6" width="11.6" height="2.4" fill="#ffcc80" stroke="#000" stroke-width="0.8"/>
<circle cx="527.8" cy="71.8" r="5.2" fill="none" stroke="#3eb43e" stroke-width="3.6"/><circle cx="527.8" cy="71.8" r="7.2" fill="none" stroke="#2a7a2a" stroke-width="0.6"/>
<path d="M523.5,70.5h8.5v3.2h-8.5z" fill="#f2f200"/><path d="M530,66.5l6,-2.5l-0.6,6.6z" fill="#3eb43e" stroke="#1d5e1d" stroke-width="0.6"/><path d="M531,71.2h5.4v1.8h-5.4z" fill="#f5f6f7"/>
<path d="M520,70.4l1.6,1.4M536,73.4l-1.6,-1" stroke="#000" stroke-width="0.8"/>
<path d="M581.90,70.30h5.4l-2.70,3z" fill="#1e1e1e"/>
<rect x="528.5" y="97.5" width="6" height="10" fill="#f8f8f8" stroke="#8a8a8a" stroke-width="0.9"/>
<path d="M521.4,104.8V94.6h6.4" fill="none" stroke="#000" stroke-width="1.3"/><rect x="522.2" y="95" width="5" height="3" fill="#f2f200"/>
<path d="M523.4,100h6v-2l4.2,3.6l-4.2,3.6v-2h-6z" fill="#22e022" stroke="#000" stroke-width="0.9"/>
<rect x="609.2" y="57.3" width="31.6" height="2.5" fill="#f5d565" stroke="#7a5c12" stroke-width="0.8"/><rect x="609.2" y="80.4" width="31.6" height="2.5" fill="#f5d565" stroke="#7a5c12" stroke-width="0.8"/>
<rect x="609.2" y="59.8" width="2.4" height="20.6" fill="#f5d565" stroke="#7a5c12" stroke-width="0.8"/>
<rect x="618.6" y="59.8" width="2.4" height="20.6" fill="#f5d565" stroke="#7a5c12" stroke-width="0.8"/>
<rect x="628.4" y="59.8" width="2.4" height="20.6" fill="#f5d565" stroke="#7a5c12" stroke-width="0.8"/>
<rect x="638.4" y="59.8" width="2.4" height="20.6" fill="#f5d565" stroke="#7a5c12" stroke-width="0.8"/>
<rect x="621" y="63.6" width="7.4" height="1.8" fill="#f5d565" stroke="#7a5c12" stroke-width="0.8"/><rect x="621" y="71.6" width="3" height="1.8" fill="#f5d565" stroke="#7a5c12" stroke-width="0.8"/>
<path d="M630.4,76.4L638.8,85" stroke="#3b6fb6" stroke-width="4.4" stroke-linecap="round"/><circle cx="628.8" cy="74.6" r="4" fill="#3b6fb6"/>
<path d="M630.4,76.4L638.8,85" stroke="#6aa6ea" stroke-width="3.2" stroke-linecap="round"/><circle cx="628.8" cy="74.6" r="3.4" fill="#6aa6ea"/>
<path d="M628.9,74.3L624,73L627.4,69.4Z" fill="#f5f6f7"/>
<rect x="659.2" y="59.3" width="31.6" height="2.5" fill="#f5d565" stroke="#7a5c12" stroke-width="0.8"/><rect x="659.2" y="82.2" width="31.6" height="2.5" fill="#f5d565" stroke="#7a5c12" stroke-width="0.8"/>
<rect x="659.2" y="61.8" width="2.4" height="20.4" fill="#f5d565" stroke="#7a5c12" stroke-width="0.8"/>
<rect x="669" y="61.8" width="2.4" height="20.4" fill="#f5d565" stroke="#7a5c12" stroke-width="0.8"/>
<rect x="679.8" y="61.8" width="2.4" height="20.4" fill="#f5d565" stroke="#7a5c12" stroke-width="0.8"/>
<rect x="688.4" y="61.8" width="2.4" height="20.4" fill="#f5d565" stroke="#7a5c12" stroke-width="0.8"/>
<rect x="671.4" y="65.6" width="8.4" height="1.9" fill="#f5d565" stroke="#7a5c12" stroke-width="0.8"/><rect x="671.4" y="73.8" width="8.4" height="1.9" fill="#f5d565" stroke="#7a5c12" stroke-width="0.8"/>
<rect x="704.7" y="58.8" width="14.8" height="10.6" fill="#ffc070" stroke="#000" stroke-width="1.5"/><rect x="707.4" y="60.6" width="9.4" height="7" fill="#fff"/>
<path d="M706.9,60v8.4M717.3,60v8.4" stroke="#000" stroke-width="0.9"/><path d="M709,60.8l6.2,6.6M715.2,60.8l-6.2,6.6" stroke="#f00000" stroke-width="1.5"/>
<path d="M857.00,70.00h5l-2.50,-2.8z" fill="#c9c9c9"/>
<path d="M857.00,86.60h5l-2.50,2.8z" fill="#c9c9c9"/>
<path d="M857,105.3h5" stroke="#c9c9c9" stroke-width="1"/><path d="M857.00,106.80h5l-2.50,2.8z" fill="#c9c9c9"/>
<rect x="878.4" y="57.6" width="29.2" height="28.8" fill="#fbfbfb" stroke="#808080" stroke-width="1"/>
<path d="M882.6,58v28M886.6,58v28M900.2,58v28M904,58v28" stroke="#808080" stroke-width="0.9"/>
<path d="M887.4,78 L899,66" stroke="#000" stroke-width="3.6" stroke-linecap="round"/><path d="M887.6,77.8 L898.8,66.2" stroke="#f4f000" stroke-width="1.9" stroke-linecap="round"/>
<path d="M908.90,109.00h5.4l-2.70,3z" fill="#1e1e1e"/>
<rect x="932.6" y="59.6" width="31" height="2.6" fill="#22e022" stroke="#0a7a0a" stroke-width="0.8"/><rect x="932.6" y="82" width="31" height="2.6" fill="#22e022" stroke="#0a7a0a" stroke-width="0.8"/>
<rect x="932.6" y="62.2" width="2.6" height="19.8" fill="#22e022" stroke="#0a7a0a" stroke-width="0.8"/>
<rect x="952.2" y="62.2" width="2.6" height="19.8" fill="#22e022" stroke="#0a7a0a" stroke-width="0.8"/>
<rect x="961" y="62.2" width="2.6" height="19.8" fill="#22e022" stroke="#0a7a0a" stroke-width="0.8"/>
<rect x="941.4" y="62.2" width="2" height="19.8" fill="#ffcc70" stroke="#8a6a20" stroke-width="0.6"/>
<rect x="998.6" y="59.8" width="30" height="22.4" fill="none" stroke="#555" stroke-width="0.9" stroke-dasharray="1.2 1"/><path d="M998.6,59.8h30" stroke="#777" stroke-width="1"/><path d="M998.6,82.2h20" stroke="#222" stroke-width="1.1"/>
<path d="M1001,62v20" stroke="#000" stroke-width="3.2" stroke-dasharray="1.1 2.5"/>
<path d="M1008,62v20" stroke="#000" stroke-width="3.2" stroke-dasharray="1.1 2.5"/>
<path d="M1017,62v20" stroke="#000" stroke-width="3.2" stroke-dasharray="1.1 2.5"/>
<path d="M1026,62v20" stroke="#000" stroke-width="3.2" stroke-dasharray="1.1 2.5"/>
<path d="M1004.5,60v22M1012.5,60v22M1021.5,60v22" stroke="#777" stroke-width="0.8" stroke-dasharray="1 1"/>
<rect x="1017.5" y="72.5" width="13" height="13" fill="#f5f6f7"/><path d="M1018,79h12M1024,73v12" stroke="#0000f0" stroke-width="2"/>
<path d="M1040.70,109.00h5.4l-2.70,3z" fill="#1e1e1e"/>
<rect x="1073.4" y="57.4" width="29.4" height="18" fill="#f3f3dc" stroke="#a6a690" stroke-width="0.9"/>
<path d="M1076.5,60.5h14.5v11h-14.5zM1080,60.5v11M1083.5,60.5v11M1076.5,66h7M1083.5,63h7.5M1083.5,68.5h7.5M1088,60.5v8" fill="none" stroke="#c2c2ac" stroke-width="0.9"/>
<rect x="1094.5" y="71" width="7" height="3.6" fill="#f9f9ea" stroke="#c2c2ac" stroke-width="0.8"/>
<path d="M1088.4,71 L1094.4,77 H1091.4 V82.6 H1085.4 V77 H1082.4 Z" fill="#68cc24" stroke="#f3f3dc" stroke-width="0.6"/>
<path d="M1081.4,82.4V86H1095.6V82.4" fill="none" stroke="#7d7d7d" stroke-width="1.5"/>
<path d="M1107.30,109.00h5.4l-2.70,3z" fill="#1e1e1e"/>
<rect x="1119.6" y="65.6" width="14.8" height="11.8" fill="#fff" stroke="#000" stroke-width="1.2"/>
<rect x="1122.4" y="69.4" width="9.2" height="5.6" fill="none" stroke="#0a9a0a" stroke-width="1.1"/><path d="M1122.4,72.3h9.2" stroke="#0a9a0a" stroke-width="1"/><rect x="1124.6" y="67.6" width="3.4" height="3.2" fill="#000"/><rect x="1125.6" y="68.6" width="1.4" height="1.2" fill="#9ad"/>
<path d="M1206.60,70.50h5.4l-2.70,3z" fill="#1e1e1e"/>
<rect x="1288.4" y="57.6" width="10.4" height="11" fill="#fff" stroke="#000" stroke-width="1.2"/>
<path d="M1289.6000000000001,60.6l4,-2.6l4,2.6" fill="none" stroke="#000" stroke-width="0.8"/>
<text x="1289.7" y="67.4" font-family="Liberation Sans, sans-serif" font-size="7.2" font-weight="bold" fill="#000" textLength="7.8" lengthAdjust="spacingAndGlyphs">E1</text>
<rect x="1280.4" y="75.4" width="10.4" height="11" fill="#fff" stroke="#000" stroke-width="1.2"/>
<path d="M1281.6000000000001,78.4l4,-2.6l4,2.6" fill="none" stroke="#000" stroke-width="0.8"/>
<text x="1281.7" y="85.2" font-family="Liberation Sans, sans-serif" font-size="7.2" font-weight="bold" fill="#000" textLength="7.8" lengthAdjust="spacingAndGlyphs">E2</text>
<rect x="1295.4" y="75.4" width="10.4" height="11" fill="#fff" stroke="#000" stroke-width="1.2"/>
<path d="M1296.6000000000001,78.4l4,-2.6l4,2.6" fill="none" stroke="#000" stroke-width="0.8"/>
<text x="1296.7" y="85.2" font-family="Liberation Sans, sans-serif" font-size="7.2" font-weight="bold" fill="#000" textLength="7.8" lengthAdjust="spacingAndGlyphs">E3</text>
<path d="M1293.6,69.2v2H1285.6v3.6M1293.6,71.2H1300.6v3.6" fill="none" stroke="#0000e0" stroke-width="0.9"/>
</svg>
<div class="b" style="left:1258px;top:142px;width:124px;height:22px;box-sizing:border-box;border:1px solid #989898;border-radius:3px;background:linear-gradient(#fff,#eef1f8);box-shadow:1px 1px 2px rgba(0,0,0,.25)"></div>
<span class="t" id="t0" style="left:18.50px;top:30.00px;color:#fff;font-size:10.5px;transform:scaleX(1.0246);">File</span>
<span class="t" id="t1" style="left:69.50px;top:30.00px;color:#1e1e1e;font-size:10.5px;transform:scaleX(1.1527);">Modeling</span>
<span class="t" id="t2" style="left:147.80px;top:30.00px;color:#1e1e1e;font-size:10.5px;transform:scaleX(1.0422);">Archives</span>
<span class="t" id="t3" style="left:219.30px;top:30.00px;color:#1e1e1e;font-size:10.5px;transform:scaleX(1.0659);">View</span>
<span class="t" id="t4" style="left:273.40px;top:30.00px;color:#1e1e1e;font-size:10.5px;transform:scaleX(1.1465);">Options</span>
<span class="t" id="t5" style="left:344.40px;top:30.00px;color:#1e1e1e;font-size:10.5px;transform:scaleX(1.1771);">Output</span>
<span class="t" id="t6" style="left:411.30px;top:30.00px;color:#1e1e1e;font-size:10.5px;transform:scaleX(1.0924);">Rendering</span>
<span class="t" id="t7" style="left:494.40px;top:30.00px;color:#1e1e1e;font-size:10.5px;transform:scaleX(0.9671);">System</span>
<span class="t" id="t8" style="left:558.40px;top:30.00px;color:#1e1e1e;font-size:10.5px;transform:scaleX(1.1080);">Point clouds</span>
<span class="t" id="t9" style="left:653.10px;top:30.00px;color:#1e1e1e;font-size:10.5px;transform:scaleX(1.1510);">Drafting</span>
<span class="t" id="t10" style="left:726.90px;top:30.00px;color:#1e1e1e;font-size:10.5px;transform:scaleX(1.0482);">Panel</span>
<span class="t" id="t11" style="left:783.20px;top:7.00px;color:#000;font-size:11px;transform:scaleX(1.0157);">Vertex BD Pro 2026 / 32.0.0</span>
<span class="t" id="t12" style="left:2.60px;top:6.00px;color:#fff;font-size:6.5px;font-weight:bold;transform:scaleX(0.9078);">BD</span>
<span class="t" id="t13" style="left:12.40px;top:91.00px;color:#1e1e1e;font-size:10.5px;transform:scaleX(1.0134);">Copy</span>
<span class="t" id="t14" style="left:12.40px;top:124.00px;color:#444;font-size:10.5px;transform:scaleX(1.0487);">Copy, move</span>
<span class="t" id="t15" style="left:124.00px;top:124.00px;color:#444;font-size:10.5px;transform:scaleX(1.0839);">Properties</span>
<span class="t" id="t16" style="left:243.30px;top:65.00px;color:#1e1e1e;font-size:10.5px;transform:scaleX(1.0631);">Clip</span>
<span class="t" id="t17" style="left:243.30px;top:94.00px;color:#1e1e1e;font-size:10.5px;transform:scaleX(1.0828);">Merge</span>
<span class="t" id="t18" style="left:288.30px;top:91.00px;color:#1e1e1e;font-size:10.5px;transform:scaleX(1.0710);">Hole</span>
<span class="t" id="t19" style="left:332.50px;top:91.00px;color:#1e1e1e;font-size:10.5px;transform:scaleX(1.0564);">Edit</span>
<span class="t" id="t20" style="left:324.40px;top:104.00px;color:#1e1e1e;font-size:10.5px;transform:scaleX(1.0728);">slope</span>
<span class="t" id="t21" style="left:273.00px;top:124.00px;color:#444;font-size:10.5px;transform:scaleX(1.0659);">Volume</span>
<span class="t" id="t22" style="left:377.20px;top:91.00px;color:#a3a3a3;font-size:10.5px;transform:scaleX(1.1186);">Material</span>
<span class="t" id="t23" style="left:432.30px;top:91.00px;color:#a3a3a3;font-size:10.5px;transform:scaleX(1.0826);">Add</span>
<span class="t" id="t24" style="left:406.20px;top:124.00px;color:#444;font-size:10.5px;transform:scaleX(0.9638);">Layer</span>
<span class="t" id="t25" style="left:485.50px;top:91.00px;color:#1e1e1e;font-size:10.5px;transform:scaleX(1.0729);">Edit</span>
<span class="t" id="t26" style="left:482.50px;top:104.00px;color:#1e1e1e;font-size:10.5px;transform:scaleX(1.0826);">parts</span>
<span class="t" id="t27" style="left:539.00px;top:65.00px;color:#1e1e1e;font-size:10.5px;transform:scaleX(1.1023);">Update</span>
<span class="t" id="t28" style="left:539.00px;top:94.00px;color:#1e1e1e;font-size:10.5px;transform:scaleX(1.0340);">Replace</span>
<span class="t" id="t29" style="left:519.00px;top:124.00px;color:#444;font-size:10.5px;transform:scaleX(1.0557);">Panel</span>
<span class="t" id="t30" style="left:604.30px;top:91.00px;color:#1e1e1e;font-size:10.5px;transform:scaleX(1.0784);">Framing</span>
<span class="t" id="t31" style="left:612.40px;top:104.00px;color:#1e1e1e;font-size:10.5px;transform:scaleX(1.1400);">tools</span>
<span class="t" id="t32" style="left:651.30px;top:91.00px;color:#1e1e1e;font-size:10.5px;transform:scaleX(1.0628);">Generate</span>
<span class="t" id="t33" style="left:661.30px;top:104.00px;color:#1e1e1e;font-size:10.5px;transform:scaleX(1.1129);">parts</span>
<span class="t" id="t34" style="left:723.30px;top:57.00px;color:#1e1e1e;font-size:10.5px;transform:scaleX(0.9985);">Remove</span>
<span class="t" id="t35" style="left:724.30px;top:79.00px;color:#a3a3a3;font-size:10.5px;transform:scaleX(1.0831);">Protect parts</span>
<span class="t" id="t36" style="left:724.30px;top:101.00px;color:#1e1e1e;font-size:10.5px;transform:scaleX(1.1001);">Protect panel</span>
<span class="t" id="t37" style="left:804.30px;top:124.00px;color:#444;font-size:10.5px;transform:scaleX(1.0784);">Framing</span>
<span class="t" id="t38" style="left:882.30px;top:91.00px;color:#1e1e1e;font-size:10.5px;transform:scaleX(1.0826);">Add</span>
<span class="t" id="t39" style="left:872.60px;top:104.00px;color:#1e1e1e;font-size:10.5px;transform:scaleX(1.1440);">profile</span>
<span class="t" id="t40" style="left:924.40px;top:91.00px;color:#1e1e1e;font-size:10.5px;transform:scaleX(1.1067);">Connect/</span>
<span class="t" id="t41" style="left:919.00px;top:104.00px;color:#1e1e1e;font-size:10.5px;transform:scaleX(1.0860);">Disconnect</span>
<span class="t" id="t42" style="left:1005.90px;top:91.00px;color:#1e1e1e;font-size:10.5px;transform:scaleX(0.9433);">NC</span>
<span class="t" id="t43" style="left:981.40px;top:104.00px;color:#1e1e1e;font-size:10.5px;transform:scaleX(1.0220);">accessories</span>
<span class="t" id="t44" style="left:1074.00px;top:91.00px;color:#1e1e1e;font-size:10.5px;transform:scaleX(1.0756);">Open</span>
<span class="t" id="t45" style="left:1062.30px;top:104.00px;color:#1e1e1e;font-size:10.5px;transform:scaleX(1.1562);">drawing</span>
<span class="t" id="t46" style="left:1138.40px;top:65.00px;color:#1e1e1e;font-size:10.5px;transform:scaleX(1.0830);">Part visibility</span>
<span class="t" id="t47" style="left:1139.80px;top:94.00px;color:#1e1e1e;font-size:10.5px;transform:scaleX(1.0668);">Freeze part numbers</span>
<span class="t" id="t48" style="left:1260.70px;top:91.00px;color:#1e1e1e;font-size:10.5px;transform:scaleX(1.0704);">Create panel</span>
<span class="t" id="t49" style="left:1269.00px;top:104.00px;color:#1e1e1e;font-size:10.5px;transform:scaleX(1.0244);">assembly</span>
<span class="t" id="t50" style="left:1263.50px;top:146.00px;color:#4b4b4b;font-size:11.3px;transform:scaleX(0.9794);">Create panel assembly</span>
<span class="t" id="t51" style="left:2.30px;top:144.00px;color:#000;font-size:11.5px;transform:scaleX(0.9166);">Model</span>
<span class="t" id="t52" style="left:7.20px;top:177.00px;color:#000;font-size:11.5px;transform:scaleX(0.9193);">General</span>
<span class="t" id="t53" style="left:28.60px;top:199.00px;color:#000;font-size:11.7px;transform:scaleX(0.9125);">PANEL_ASSEMBLY</span>
<span class="t" id="t54" style="left:47.00px;top:217.00px;color:#000;font-size:11.7px;transform:scaleX(1.0088);">Rendering</span>
<span class="t" id="t55" style="left:47.00px;top:235.00px;color:#000;font-size:11.7px;transform:scaleX(1.0193);">Ground Floor</span>
<span class="t" id="t56" style="left:66.30px;top:253.00px;color:#b4b6be;font-size:11.7px;transform:scaleX(0.9721);">Walls</span>
<span class="t" id="t57" style="left:66.30px;top:271.00px;color:#b4b6be;font-size:11.7px;transform:scaleX(1.0102);">Openings</span>
<span class="t" id="t58" style="left:66.60px;top:289.00px;color:#000;font-size:11.7px;transform:scaleX(0.9222);">Panels</span>
<span class="t" id="t59" style="left:85.20px;top:307.00px;color:#000;font-size:11.7px;transform:scaleX(1.0198);">Wall panel</span>
<span class="t" id="t60" style="left:104.30px;top:325.00px;color:#fff;font-size:11.7px;transform:scaleX(0.7539);">E1</span>
<span class="t" id="t61" style="left:104.30px;top:343.00px;color:#fff;font-size:11.7px;transform:scaleX(0.8046);">E2</span>
<span class="t" id="t62" style="left:104.30px;top:361.00px;color:#fff;font-size:11.7px;transform:scaleX(0.8046);">E3</span>
<span class="t" id="t63" style="left:104.30px;top:379.00px;color:#fff;font-size:11.7px;transform:scaleX(0.7502);">E4</span>
<span class="t" id="t64" style="left:104.30px;top:397.00px;color:#fff;font-size:11.7px;transform:scaleX(0.7502);">E5</span>
<span class="t" id="t65" style="left:104.30px;top:415.00px;color:#fff;font-size:11.7px;transform:scaleX(0.8046);">E6</span>
<span class="t" id="t66" style="left:104.30px;top:433.00px;color:#fff;font-size:11.7px;transform:scaleX(0.8046);">E7</span>
<span class="t" id="t67" style="left:104.30px;top:451.00px;color:#fff;font-size:11.7px;transform:scaleX(0.8046);">E8</span>
<span class="t" id="t68" style="left:85.30px;top:469.00px;color:#000;font-size:11.7px;transform:scaleX(1.0125);">Floor panel</span>
<span class="t" id="t69" style="left:104.30px;top:487.00px;color:#fff;font-size:11.7px;transform:scaleX(0.8296);">F1</span>
<span class="t" id="t70" style="left:85.30px;top:505.00px;color:#000;font-size:11.7px;transform:scaleX(0.9904);">Area panel</span>
<span class="t" id="t71" style="left:104.30px;top:523.00px;color:#fff;font-size:11.7px;transform:scaleX(0.8379);">C1</span>
<span class="t" id="t72" style="left:104.30px;top:541.00px;color:#fff;font-size:11.7px;transform:scaleX(0.8933);">C2</span>
<span class="t" id="t73" style="left:104.30px;top:559.00px;color:#fff;font-size:11.7px;transform:scaleX(0.8933);">C3</span>
<span class="t" id="t74" style="left:104.30px;top:577.00px;color:#fff;font-size:11.7px;transform:scaleX(0.8355);">C4</span>
<span class="t" id="t75" style="left:66.50px;top:595.00px;color:#b4b6be;font-size:11.7px;transform:scaleX(0.9842);">Planar structures</span>
<span class="t" id="t76" style="left:66.50px;top:613.00px;color:#b4b6be;font-size:11.7px;transform:scaleX(0.9791);">Rooms</span>
</body></html>
